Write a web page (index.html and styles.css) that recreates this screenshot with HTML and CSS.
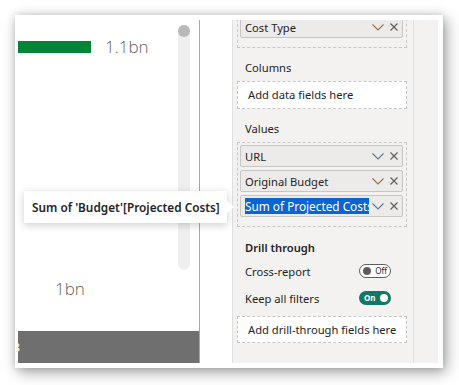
FILE: index.html
```html
<!DOCTYPE html>
<html lang="en">
<head>
    <meta charset="UTF-8">
    <meta name="viewport" content="width=device-width, initial-scale=1.0">
    <title>Visualizations pane</title>
    <link rel="stylesheet" href="styles.css">
</head>
<body>
    <div class="stage">
        <div class="frame">
            <div class="visual">
                <div class="chart">
                    <div class="bars">
                        <div class="bar-row">
                            <span class="bar"></span>
                            <span class="bar-label">1.1bn</span>
                        </div>
                        <div class="bar-row second">
                            <span class="bar-label">1bn</span>
                        </div>
                    </div>
                    <div class="scrollbar"><span class="thumb"></span></div>
                </div>
                <div class="axis-strip"><span class="axis-clip"><span>3</span></span></div>
            </div>

            <div class="pane">
                <div class="pane-main">
                    <!-- Rows well, scrolled so only its last field shows -->
                    <div class="well first">
                        <div class="field">
                            <span class="field-name">Cost Type</span>
                            <svg class="chevron warm" viewBox="0 0 12 7"><path d="M0.5 0.5 L6 6 L11.5 0.5"/></svg>
                            <svg class="close" viewBox="0 0 8 8"><path d="M0.5 0.5 L7.5 7.5 M7.5 0.5 L0.5 7.5"/></svg>
                        </div>
                    </div>

                    <div class="section-label">Columns</div>
                    <div class="drop-box">Add data fields here</div>

                    <div class="section-label">Values</div>
                    <div class="well">
                        <div class="field">
                            <span class="field-name">URL</span>
                            <svg class="chevron cool" viewBox="0 0 12 7"><path d="M0.5 0.5 L6 6 L11.5 0.5"/></svg>
                            <svg class="close" viewBox="0 0 8 8"><path d="M0.5 0.5 L7.5 7.5 M7.5 0.5 L0.5 7.5"/></svg>
                        </div>
                        <div class="field">
                            <span class="field-name">Original Budget</span>
                            <svg class="chevron warm" viewBox="0 0 12 7"><path d="M0.5 0.5 L6 6 L11.5 0.5"/></svg>
                            <svg class="close" viewBox="0 0 8 8"><path d="M0.5 0.5 L7.5 7.5 M7.5 0.5 L0.5 7.5"/></svg>
                        </div>
                        <div class="field">
                            <span class="field-edit"><span class="selected">Sum of Projected Costs</span></span>
                            <svg class="chevron cool" viewBox="0 0 12 7"><path d="M0.5 0.5 L6 6 L11.5 0.5"/></svg>
                            <svg class="close" viewBox="0 0 8 8"><path d="M0.5 0.5 L7.5 7.5 M7.5 0.5 L0.5 7.5"/></svg>
                        </div>
                    </div>

                    <div class="section-label drill">Drill through</div>
                    <div class="option-row">
                        <span>Cross-report</span>
                        <span class="toggle off"><span class="knob"></span><span class="toggle-text">Off</span></span>
                    </div>
                    <div class="option-row">
                        <span>Keep all filters</span>
                        <span class="toggle on"><span class="toggle-text">On</span><span class="knob"></span></span>
                    </div>
                    <div class="drop-box drill-box">Add drill-through fields here</div>
                </div>
                <div class="pane-strip"></div>
            </div>
        </div>

        <div class="tooltip">Sum of 'Budget'[Projected Costs]</div>
    </div>
</body>
</html>
```

FILE: styles.css
```css
/* Reset default styles */
* {
    margin: 0;
    padding: 0;
    box-sizing: border-box;
}
body {
    font-family: 'Noto Sans', 'Open Sans', sans-serif;
    background-color: #fff;
    color: #252423;
    font-size: 11.2px;
}
.stage {
    position: relative;
    padding: 15px 16px 17px 15px;
    width: 459px;
    height: 385px;
}
.frame {
    display: flex;
    width: 428px;
    height: 353px;
    padding: 5px 5px 5px 3px;
    background-color: #fff;
    box-shadow: 3px 4px 14px rgba(0, 0, 0, 0.38), 0 0 6px rgba(0, 0, 0, 0.12);
}

/* Left: the chart visual */
.visual {
    display: flex;
    flex-direction: column;
    width: 182px;
    border-right: 1px solid #a8a8a8;
}
.chart {
    flex: 1;
    display: flex;
}
.bars {
    width: 160px;
    padding-top: 20px;
}
.bar-row {
    display: flex;
    align-items: center;
    height: 14px;
}
.bar-row.second {
    margin-top: 228px;
    padding-left: 37px;
}
.bar {
    width: 73px;
    height: 12px;
    background-color: #038537;
    margin-right: 14px;
}
.bar-label {
    font-family: 'Open Sans', 'Noto Sans', sans-serif;
    font-weight: 300;
    font-size: 17px;
    line-height: 14px;
    color: #605e5c;
}
.scrollbar {
    width: 12px;
    height: 245px;
    margin-top: 5px;
    background-color: #efefef;
    border-radius: 6px;
}
.thumb {
    display: block;
    width: 12px;
    height: 12px;
    border-radius: 50%;
    background-color: #b9b9b9;
}
.axis-strip {
    height: 32px;
    background-color: #6f6f6f;
    display: flex;
    align-items: center;
}
.axis-clip {
    width: 3px;
    overflow: hidden;
    color: #fbe9dc;
    font-size: 12px;
    font-weight: 700;
}
.axis-clip span {
    display: block;
    margin-left: -5px;
}

/* Right: fields pane */
.pane {
    display: flex;
    margin-left: 32px;
    width: 206px;
    background-color: #f3f2f1;
    overflow: hidden;
}
.pane-main {
    width: 182px;
    padding: 0 6px 0 4px;
    border-left: 1px solid #e1dfdd;
    border-right: 1px solid #e1dfdd;
}
.pane-strip {
    flex: 1;
}
.well {
    display: flex;
    flex-direction: column;
    gap: 3px;
    border: 1px dashed #c8c6c4;
    padding: 2px 3px 9px 2px;
}
.well.first {
    margin-top: -7px;
}
.field {
    display: flex;
    align-items: center;
    height: 22px;
    padding: 0 4px;
    border: 1px solid #c8c6c4;
    border-radius: 2px;
    background-color: #edebe9;
    white-space: nowrap;
}
.field-name {
    flex: 1;
}
.field-edit {
    flex: 1;
    overflow: hidden;
    white-space: nowrap;
    margin-right: 3px;
}
.selected {
    background-color: #0a64d2;
    color: #fff;
    font-size: 11.8px;
    line-height: 16px;
    display: inline-block;
}
.chevron {
    width: 12px;
    height: 7px;
    margin-right: 6px;
    fill: none;
    stroke: #7a6e66;
    stroke-width: 1.1;
}
.chevron.warm {
    stroke: #9a6c50;
}
.chevron.cool {
    stroke: #5a7796;
}
.close {
    width: 8px;
    height: 8px;
    fill: none;
    stroke: #605e5c;
    stroke-width: 1.2;
}
.section-label {
    height: 16px;
    line-height: 16px;
    margin: 12px 0 5px 8px;
}
.section-label.drill {
    font-weight: 600;
    margin-top: 13px;
    margin-bottom: 5px;
}
.drop-box {
    height: 28px;
    line-height: 26px;
    padding-left: 10px;
    border: 1px dashed #c8c6c4;
    background-color: #fff;
    white-space: nowrap;
}
.drill-box {
    height: 27px;
    line-height: 25px;
    margin-top: 8px;
}
.option-row {
    display: flex;
    justify-content: space-between;
    align-items: center;
    height: 20px;
    padding: 0 16px 0 8px;
    margin-bottom: 7px;
}
.toggle {
    display: flex;
    align-items: center;
    justify-content: space-between;
    width: 32px;
    height: 14px;
    border-radius: 7px;
    padding: 0 3px;
    font-size: 8px;
}
.toggle.off {
    border: 1px solid #605e5c;
    background-color: #fff;
}
.toggle.on {
    background-color: #117865;
    color: #fff;
    font-weight: 700;
    padding-left: 5px;
}
.knob {
    width: 8px;
    height: 8px;
    border-radius: 50%;
    background-color: #605e5c;
}
.toggle.on .knob {
    background-color: #fff;
}
.toggle-text {
    line-height: 12px;
}

/* Hover tooltip over the field */
.tooltip {
    position: absolute;
    left: 24px;
    top: 191px;
    width: 203px;
    height: 32px;
    padding-left: 8px;
    line-height: 32px;
    font-size: 11.8px;
    font-weight: 600;
    white-space: nowrap;
    background-color: #fff;
    box-shadow: 0 2px 8px rgba(0, 0, 0, 0.2);
}
.tooltip::after {
    content: "";
    position: absolute;
    right: -7px;
    top: 10px;
    border-left: 7px solid #fff;
    border-top: 6px solid transparent;
    border-bottom: 6px solid transparent;
}
```
